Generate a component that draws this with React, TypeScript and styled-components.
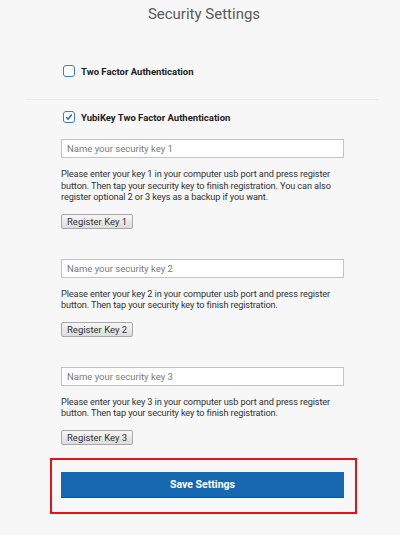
import styled, { createGlobalStyle } from "styled-components";

const GlobalStyle = createGlobalStyle`
  html, body {
    margin: 0;
    padding: 0;
    background: #f7f7f7;
  }
  body {
    font-family: Roboto, "Liberation Sans", Arial, sans-serif;
    color: #333;
  }
`;

const Page = styled.div`
  width: 400px;
  height: 535px;
  box-sizing: border-box;
  padding: 0 21px 0 25px;
  background: #f7f7f7;
`;

const Title = styled.h1`
  margin: 0;
  height: 29px;
  line-height: 29px;
  text-align: center;
  padding-left: 4px;
  font-size: 15px;
  font-weight: 400;
  color: #5a5a5a;
`;

const Section = styled.div<{ $top: number; $bottom: number }>`
  padding: ${(p) => p.$top}px 0 ${(p) => p.$bottom}px 36px;
`;

const Divider = styled.hr`
  margin: 0;
  border: none;
  border-top: 1px solid #ebebeb;
`;

const CheckRow = styled.label`
  display: flex;
  align-items: center;
  gap: 6px;
  height: 14px;
  padding-left: 2px;
  font-size: 9.5px;
  font-weight: 700;
  color: #222;
`;

const Box = styled.span`
  width: 10px;
  height: 10px;
  border: 1.6px solid #3b7fc4;
  border-radius: 3px;
  background: #fff;
  display: flex;
  align-items: center;
  justify-content: center;
`;

const KeyBlock = styled.div<{ $gap: number }>`
  width: 283px;
  margin-top: ${(p) => p.$gap}px;
`;

const NameInput = styled.input`
  display: block;
  width: 283px;
  height: 19px;
  box-sizing: border-box;
  border: 1px solid #b8c6d9;
  background: #fff;
  padding: 0 5px;
  font-family: Roboto, "Liberation Sans", Arial, sans-serif;
  font-size: 9.5px;
  color: #333;
  outline: none;
  &::placeholder {
    color: #7a7a7a;
  }
`;

const Help = styled.p`
  margin: 10px 0 0;
  font-size: 9.2px;
  letter-spacing: -0.12px;
  line-height: 11.5px;
  color: #333;
`;

const RegisterButton = styled.button`
  display: block;
  margin-top: 11px;
  height: 15px;
  padding: 0 5px;
  border: 1px solid #a9a9a9;
  border-radius: 2px;
  background: linear-gradient(#f6f6f6, #dcdcdc);
  font-family: Roboto, "Liberation Sans", Arial, sans-serif;
  font-size: 9.5px;
  color: #333;
  line-height: 13px;
`;

const Highlight = styled.div`
  margin: 13px 0 0 -11px;
  width: 307px;
  box-sizing: border-box;
  border: 2px solid #e5121c;
  padding: 12px 11px 14px 9px;
`;

const SaveButton = styled.button`
  display: block;
  width: 283px;
  height: 26px;
  border: none;
  border-bottom: 1px solid #0e5591;
  background: #1669b1;
  color: #fff;
  font-family: Roboto, "Liberation Sans", Arial, sans-serif;
  font-size: 10.5px;
  font-weight: 700;
`;

const Check = ({ checked }: { checked: boolean }) => (
  <Box>
    {checked && (
      <svg width="8" height="8" viewBox="0 0 8 8">
        <path d="M1.2 4.2 L3.1 6.1 L6.8 1.6" fill="none" stroke="#2a6db5" strokeWidth="1.5" />
      </svg>
    )}
  </Box>
);

const keys = [
  {
    n: 1,
    gap: 15,
    text: "Please enter your key 1 in your computer usb port and press register button. Then tap your security key to finish registration. You can also register optional 2 or 3 keys as a backup if you want.",
  },
  {
    n: 2,
    gap: 30,
    text: "Please enter your key 2 in your computer usb port and press register button. Then tap your security key to finish registration.",
  },
  {
    n: 3,
    gap: 30,
    text: "Please enter your key 3 in your computer usb port and press register button. Then tap your security key to finish registration.",
  },
];

export default function App() {
  return (
    <Page>
      <GlobalStyle />
      <Title>Security Settings</Title>
      <Section $top={35} $bottom={21}>
        <CheckRow>
          <Check checked={false} />
          Two Factor Authentication
        </CheckRow>
      </Section>
      <Divider />
      <Section $top={10} $bottom={0}>
        <CheckRow>
          <Check checked />
          YubiKey Two Factor Authentication
        </CheckRow>
        {keys.map((k) => (
          <KeyBlock key={k.n} $gap={k.gap}>
            <NameInput placeholder={`Name your security key ${k.n}`} />
            <Help>{k.text}</Help>
            <RegisterButton>Register Key {k.n}</RegisterButton>
          </KeyBlock>
        ))}
        <Highlight>
          <SaveButton>Save Settings</SaveButton>
        </Highlight>
      </Section>
    </Page>
  );
}
